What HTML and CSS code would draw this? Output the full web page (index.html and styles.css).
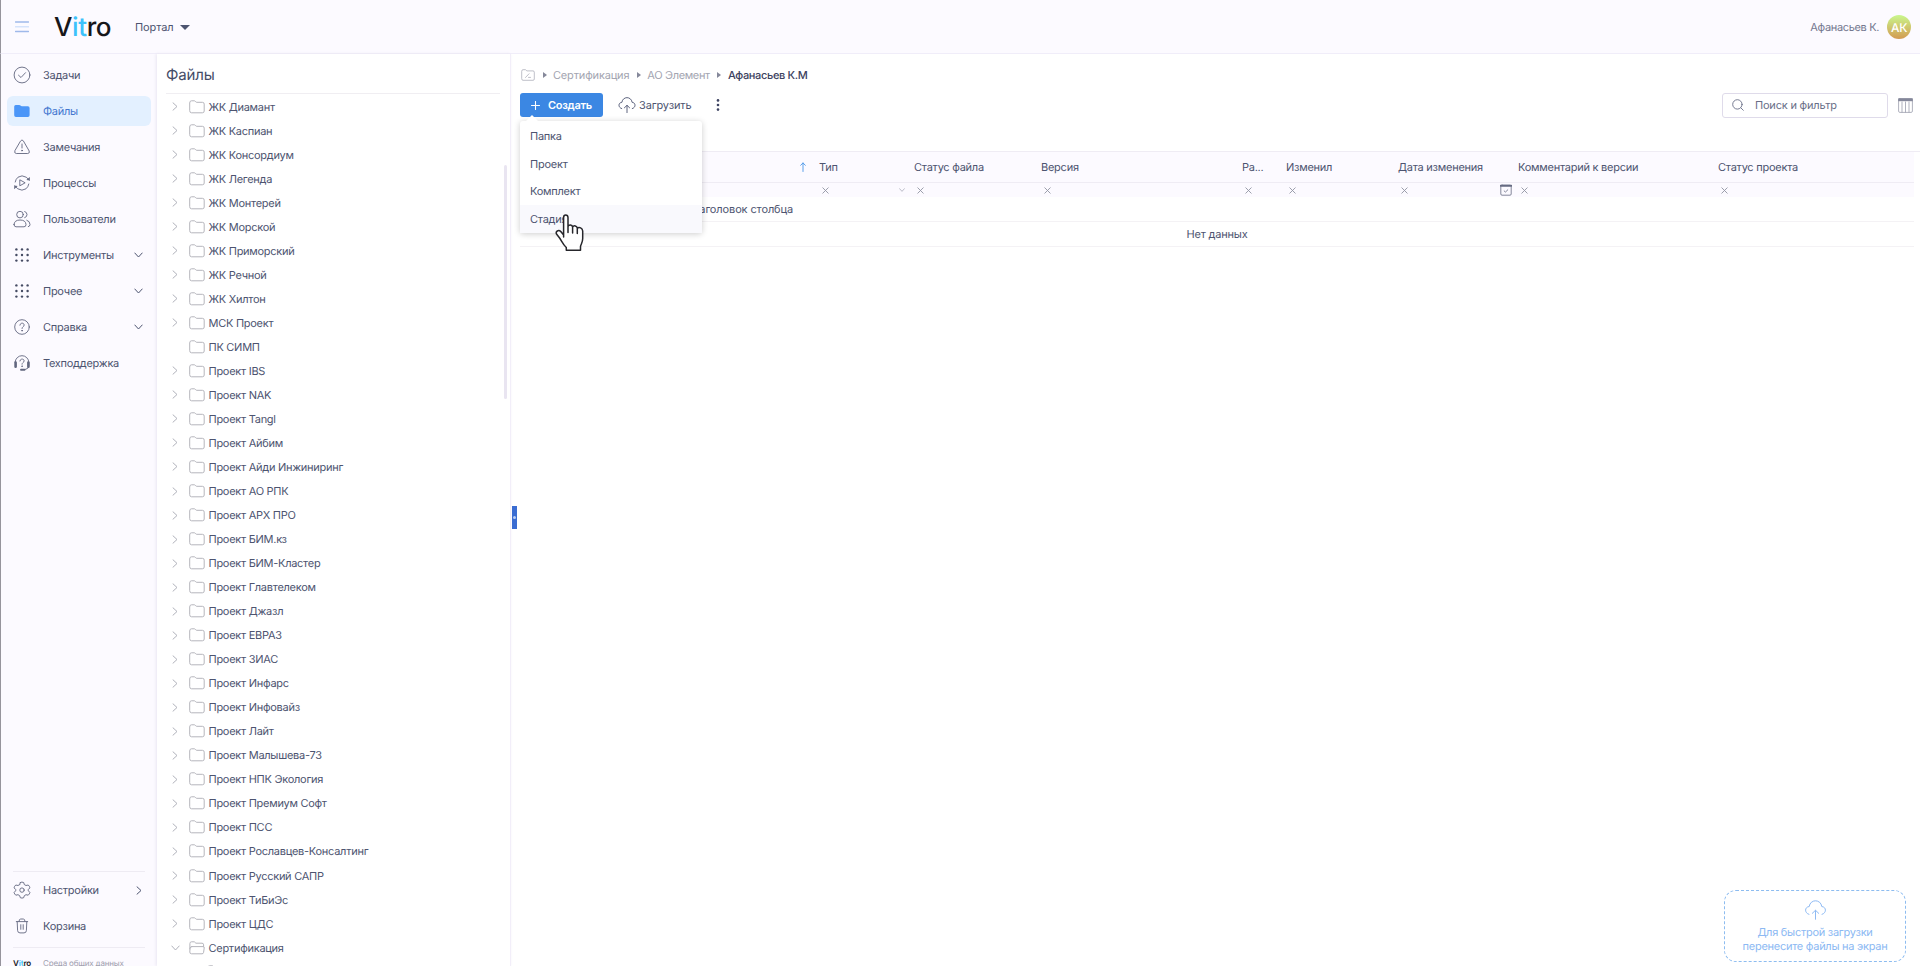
FILE: index.html
```html
<!DOCTYPE html>
<html lang="ru">
<head>
<meta charset="utf-8">
<title>Vitro — Файлы</title>
<link rel="stylesheet" href="styles.css">
</head>
<body>
<svg class="sprite" aria-hidden="true">
  <symbol id="chev" viewBox="0 0 6 9"><path d="M1 .8 5 4.5 1 8.2"/></symbol>
  <symbol id="chev-down" viewBox="0 0 9 6"><path d="M.8 1 4.5 5 8.2 1"/></symbol>
  <symbol id="folder" viewBox="0 0 16 14"><path d="M.7 2.6Q.7.8 2.5.8H5.3Q6 .8 6.4 1.4L6.9 2Q7.2 2.3 8 2.3H13.4Q15.2 2.3 15.2 4.1V11Q15.2 12.8 13.4 12.8H2.5Q.7 12.8.7 11Z"/></symbol>
  <symbol id="folder-open" viewBox="0 0 16 14"><path d="M.9 8V2.6Q.9.8 2.5.8H5.3L6.9 2.2H13Q14.6 2.2 14.6 3.8V5.4M2.8 5.6H14Q15.5 5.6 15.2 7L14.6 11.4Q14.4 12.8 13 12.8H2.6Q.7 12.8.8 11L1 7.2Q1.2 5.6 2.8 5.6Z"/></symbol>
  <symbol id="x" viewBox="0 0 7 7"><path d="M.8.8 6.2 6.2M6.2.8.8 6.2"/></symbol>
  <symbol id="dots" viewBox="0 0 16 16"><g fill="currentColor" stroke="none"><circle cx="2.4" cy="2.4" r="1.2"/><circle cx="8" cy="2.4" r="1.2"/><circle cx="13.6" cy="2.4" r="1.2"/><circle cx="2.4" cy="8" r="1.2"/><circle cx="8" cy="8" r="1.2"/><circle cx="13.6" cy="8" r="1.2"/><circle cx="2.4" cy="13.6" r="1.2"/><circle cx="8" cy="13.6" r="1.2"/><circle cx="13.6" cy="13.6" r="1.2"/></g></symbol>
  <symbol id="cloud" viewBox="0 0 18 17"><path d="M3.7 11.6C-.1 10.600.1 5.600 3.900 5.300C4.800-.9 13.200-.9 14.100 5.300C17.900 5.600 18.100 10.600 14.300 11.600M9 15.600V8.600M6.400 10.800 9 8.300 11.600 10.800"/></symbol>
</svg>

<div class="app">
  <header class="topbar">
    <svg class="burger" viewBox="0 0 14 12"><path d="M.5 1H13.500M.5 10.500H13.500" stroke="#9fb9ea"/><path d="M.5 5.800H13.500" stroke="#d5e3fc"/></svg>
    <div class="logo">V<span>it</span>ro</div>
    <div class="portal">Портал <i class="caret"></i></div>
    <div class="user">Афанасьев К.</div>
    <div class="avatar">АК</div>
  </header>

  <aside class="sidebar">
    <nav class="nav">
      <a class="item"><svg class="ico" viewBox="0 0 18 18"><circle cx="9" cy="9" r="7.900"/><path d="M5.500 9.200 8 11.500 12.500 6.700"/></svg>Задачи</a>
      <a class="item active"><svg class="ico" viewBox="0 0 18 18"><path d="M1.200 4.400Q1.200 2.900 2.700 2.900H6.200Q7 2.900 7.500 3.600T8.900 4.300H14.900Q16.600 4.300 16.600 6V13.200Q16.600 14.900 14.900 14.900H2.900Q1.200 14.900 1.200 13.200Z" fill="#4b96f8" stroke="none"/></svg>Файлы</a>
      <a class="item"><svg class="ico" viewBox="0 0 18 18"><path d="M7.700 2.800Q9 1 10.300 2.800L16.200 13Q17 15.400 14.700 15.500H3.300Q1 15.400 1.800 13ZM9 6V10"/><circle cx="9" cy="12.600" r=".5"/></svg>Замечания</a>
      <a class="item"><svg class="ico" viewBox="0 0 18 18"><path d="M2.200 8Q2.800 5 5 3.200Q9 .5 13.200 3.200L16.500 6.200M15.800 10Q15.200 13 13 14.800Q9 17.500 4.800 14.800L1.800 12"/><path d="M16.900 2.900 16.700 6.600 13.300 6ZM1.100 15.300 1.300 11.500 4.700 12.100Z" fill="currentColor" stroke="none"/><path d="M6.800 6.200V11.800L11.800 9Z"/></svg>Процессы</a>
      <a class="item"><svg class="ico" viewBox="0 0 18 18"><circle cx="7" cy="4.600" r="3.300"/><path d="M1 14.500Q1.300 10 7 10T13 14.500Q13 16.800 11 16.800H3Q1 16.800 1 14.500ZM11.700 1.500Q14 2.200 14 4.600T11.700 7.700M13.800 10.200Q17 11.200 17 14.500Q17 16.400 15.300 16.700"/></svg>Пользователи</a>
      <a class="item"><svg class="ico small"><use href="#dots"/></svg>Инструменты<svg class="more"><use href="#chev-down"/></svg></a>
      <a class="item"><svg class="ico small"><use href="#dots"/></svg>Прочее<svg class="more"><use href="#chev-down"/></svg></a>
      <a class="item"><svg class="ico" viewBox="0 0 18 18"><circle cx="9" cy="9" r="7.300"/><path d="M6.900 7.200C7 4.300 11.300 4.500 11.100 7.200C11 8.800 9 8.700 9 10.500"/><circle cx="9" cy="12.700" r=".4"/></svg>Справка<svg class="more"><use href="#chev-down"/></svg></a>
      <a class="item"><svg class="ico" viewBox="0 0 18 18"><path d="M2.200 8V8.500A6.800 6.800 0 0 1 15.800 8.500V12Q15.800 14.800 12 15.600M6.900 7C7 4.300 11.300 4.500 11.100 7C11 8.500 9 8.500 9 10.200"/><circle cx="9" cy="12.200" r=".3"/><path d="M2.600 8.500V12.800M15.400 8.500V12.800" stroke-width="2.600"/><path d="M8 15.800H11.500" stroke-width="1.900"/></svg>Техподдержка</a>
    </nav>
    <div class="bottom">
      <a class="item"><svg class="ico" viewBox="0 0 18 18"><path d="M7.300 1.500Q9 .6 10.700 1.500L11.300 3.600 13 4.500 15.200 4Q16.700 5.200 16.900 6.900L15.300 8.500V9.800L16.900 11.400Q16.600 13.100 15.200 14.200L13 13.700 11.300 14.700 10.700 16.700Q9 17.500 7.300 16.700L6.700 14.700 5 13.700 2.800 14.200Q1.400 13.100 1.100 11.400L2.700 9.800V8.500L1.100 6.900Q1.300 5.200 2.800 4L5 4.500 6.700 3.600Z"/><circle cx="9" cy="9.100" r="2.200"/></svg>Настройки<svg class="go"><use href="#chev"/></svg></a>
      <a class="item"><svg class="ico" viewBox="0 0 18 18"><path d="M3.300 4.600H14.700M6 4.300Q6 2 7.700 2H10.300Q12 2 12 4.300M4.200 4.800 4.600 13.500Q4.700 15.900 7 15.900H11Q13.300 15.900 13.400 13.500L13.800 4.800M7.800 7.700V12.300M10.200 7.700V12.300"/></svg>Корзина</a>
      <div class="about"><div class="logo mini">V<span>it</span>ro</div><span>Среда общих данных</span></div>
    </div>
  </aside>

  <section class="files">
    <h1>Файлы</h1>
    <ul class="tree">
      <li><svg class="tw"><use href="#chev"/></svg><svg class="fd"><use href="#folder"/></svg>ЖК Диамант</li>
      <li><svg class="tw"><use href="#chev"/></svg><svg class="fd"><use href="#folder"/></svg>ЖК Каспиан</li>
      <li><svg class="tw"><use href="#chev"/></svg><svg class="fd"><use href="#folder"/></svg>ЖК Консордиум</li>
      <li><svg class="tw"><use href="#chev"/></svg><svg class="fd"><use href="#folder"/></svg>ЖК Легенда</li>
      <li><svg class="tw"><use href="#chev"/></svg><svg class="fd"><use href="#folder"/></svg>ЖК Монтерей</li>
      <li><svg class="tw"><use href="#chev"/></svg><svg class="fd"><use href="#folder"/></svg>ЖК Морской</li>
      <li><svg class="tw"><use href="#chev"/></svg><svg class="fd"><use href="#folder"/></svg>ЖК Приморский</li>
      <li><svg class="tw"><use href="#chev"/></svg><svg class="fd"><use href="#folder"/></svg>ЖК Речной</li>
      <li><svg class="tw"><use href="#chev"/></svg><svg class="fd"><use href="#folder"/></svg>ЖК Хилтон</li>
      <li><svg class="tw"><use href="#chev"/></svg><svg class="fd"><use href="#folder"/></svg>МСК Проект</li>
      <li><svg class="tw"></svg><svg class="fd"><use href="#folder"/></svg>ПК СИМП</li>
      <li><svg class="tw"><use href="#chev"/></svg><svg class="fd"><use href="#folder"/></svg>Проект IBS</li>
      <li><svg class="tw"><use href="#chev"/></svg><svg class="fd"><use href="#folder"/></svg>Проект NAK</li>
      <li><svg class="tw"><use href="#chev"/></svg><svg class="fd"><use href="#folder"/></svg>Проект Tangl</li>
      <li><svg class="tw"><use href="#chev"/></svg><svg class="fd"><use href="#folder"/></svg>Проект Айбим</li>
      <li><svg class="tw"><use href="#chev"/></svg><svg class="fd"><use href="#folder"/></svg>Проект Айди Инжиниринг</li>
      <li><svg class="tw"><use href="#chev"/></svg><svg class="fd"><use href="#folder"/></svg>Проект АО РПК</li>
      <li><svg class="tw"><use href="#chev"/></svg><svg class="fd"><use href="#folder"/></svg>Проект АРХ ПРО</li>
      <li><svg class="tw"><use href="#chev"/></svg><svg class="fd"><use href="#folder"/></svg>Проект БИМ.кз</li>
      <li><svg class="tw"><use href="#chev"/></svg><svg class="fd"><use href="#folder"/></svg>Проект БИМ-Кластер</li>
      <li><svg class="tw"><use href="#chev"/></svg><svg class="fd"><use href="#folder"/></svg>Проект Главтелеком</li>
      <li><svg class="tw"><use href="#chev"/></svg><svg class="fd"><use href="#folder"/></svg>Проект Джазл</li>
      <li><svg class="tw"><use href="#chev"/></svg><svg class="fd"><use href="#folder"/></svg>Проект ЕВРАЗ</li>
      <li><svg class="tw"><use href="#chev"/></svg><svg class="fd"><use href="#folder"/></svg>Проект ЗИАС</li>
      <li><svg class="tw"><use href="#chev"/></svg><svg class="fd"><use href="#folder"/></svg>Проект Инфарс</li>
      <li><svg class="tw"><use href="#chev"/></svg><svg class="fd"><use href="#folder"/></svg>Проект Инфовайз</li>
      <li><svg class="tw"><use href="#chev"/></svg><svg class="fd"><use href="#folder"/></svg>Проект Лайт</li>
      <li><svg class="tw"><use href="#chev"/></svg><svg class="fd"><use href="#folder"/></svg>Проект Малышева-73</li>
      <li><svg class="tw"><use href="#chev"/></svg><svg class="fd"><use href="#folder"/></svg>Проект НПК Экология</li>
      <li><svg class="tw"><use href="#chev"/></svg><svg class="fd"><use href="#folder"/></svg>Проект Премиум Софт</li>
      <li><svg class="tw"><use href="#chev"/></svg><svg class="fd"><use href="#folder"/></svg>Проект ПСС</li>
      <li><svg class="tw"><use href="#chev"/></svg><svg class="fd"><use href="#folder"/></svg>Проект Рославцев-Консалтинг</li>
      <li><svg class="tw"><use href="#chev"/></svg><svg class="fd"><use href="#folder"/></svg>Проект Русский САПР</li>
      <li><svg class="tw"><use href="#chev"/></svg><svg class="fd"><use href="#folder"/></svg>Проект ТиБиЭс</li>
      <li><svg class="tw"><use href="#chev"/></svg><svg class="fd"><use href="#folder"/></svg>Проект ЦДС</li>
      <li><svg class="tw open"><use href="#chev-down"/></svg><svg class="fd"><use href="#folder-open"/></svg>Сертификация</li>
      <li class="child"><svg class="fd"><use href="#folder"/></svg></li>
    </ul>
    <div class="scroll"></div>
    <div class="handle"></div>
  </section>

  <main class="main">
    <div class="crumbs">
      <svg class="root" viewBox="0 0 14 12"><path d="M.7 2Q.7.700 2 .7H4.600L5.800 1.900H12Q13.300 1.900 13.300 3.200V10Q13.300 11.300 12 11.300H2Q.7 11.300.7 10ZM4.500 8.500 8 4.800M7.500 8.400H9.500"/></svg>
      <i></i><span>Сертификация</span><i></i><span class="near">АО Элемент</span><i></i><b>Афанасьев К.М</b>
    </div>
    <div class="toolbar">
      <div class="create"><svg viewBox="0 0 10 10"><path d="M5 .5V9.500M.5 5H9.500"/></svg>Создать</div>
      <div class="upload"><svg><use href="#cloud"/></svg>Загрузить</div>
      <svg class="kebab" viewBox="0 0 4 12"><circle cx="2" cy="1.400" r="1.300"/><circle cx="2" cy="6" r="1.300"/><circle cx="2" cy="10.600" r="1.300"/></svg>
      <div class="search"><svg viewBox="0 0 12 12"><circle cx="5.400" cy="5.400" r="4.700"/><path d="M8.900 8.900 11.300 11.300"/></svg>Поиск и фильтр</div>
      <svg class="cols" viewBox="0 0 15 15"><rect x=".6" y=".6" width="13.800" height="13.800" rx="1.300"/><path d="M4 4V14.400M7.500 4V14.400M11 4V14.400"/><path d="M.2.300H14.800V3.200H.2Z" class="cap"/></svg>
    </div>
    <div class="table">
      <div class="row head"><div class="sort"><svg viewBox="0 0 6 10"><path d="M3 9.500V1M.7 3.300 3 .9 5.300 3.300"/></svg></div><div>Тип</div><div>Статус файла</div><div>Версия</div><div>Ра...</div><div>Изменил</div><div>Дата изменения</div><div>Комментарий к версии</div><div>Статус проекта</div></div>
      <div class="row filter"><div></div><div><svg><use href="#x"/></svg><svg class="sel"><use href="#chev-down"/></svg></div><div><svg><use href="#x"/></svg></div><div><svg><use href="#x"/></svg></div><div><svg><use href="#x"/></svg></div><div><svg><use href="#x"/></svg></div><div><svg><use href="#x"/></svg><svg class="cal" viewBox="0 0 12 12"><rect x=".8" y="1.200" width="10.400" height="10" rx="1.200"/><path d="M.8 1.800H11.200" stroke-width="2"/><path d="M4.200 7 5.500 8 7.800 5.800"/></svg></div><div><svg><use href="#x"/></svg></div><div><svg><use href="#x"/></svg></div></div>
      <div class="group"><span>Перетащите сюда заголовок столбца</span></div>
      <div class="empty">Нет данных</div>
    </div>
    <div class="menu">
      <div>Папка</div><div>Проект</div><div>Комплект</div><div class="hover">Стадия</div>
    </div>
    <svg class="pointer" viewBox="0 0 30 38"><path d="M8.600 23V3.500C8.600.3 12.800.3 13 3.500V12.500C13.800 10.200 17.300 10.500 17.600 13C18.800 11 22 11.700 22.300 14.200C24.200 12.600 27.500 14 27.700 17V24.500C27.700 28.500 26 30 25.500 32.500V36.300H11.300V33.500C8 30.500 6.500 26.500 4.600 24L1.500 20C.3 17.500 3.500 15.300 5.800 17.600L8.600 21M13 12V18.500M17.600 13V19M22.300 14.200V19.500"/></svg>
    <div class="drop"><svg viewBox="0 0 18 17"><use href="#cloud"/></svg>Для быстрой загрузки<br>перенесите файлы на экран</div>
  </main>
</div>
</body>
</html>
```
FILE: styles.css
```css
* { box-sizing: border-box; }
body { margin: 0; font: 11px/16px Inter, sans-serif; letter-spacing: -.27px; text-rendering: geometricPrecision; color: #4d5470; background: #fff; overflow: hidden; }
svg { fill: none; stroke: currentColor; stroke-linecap: round; stroke-linejoin: round; flex: none; display: block; }
.sprite { position: absolute; width: 0; height: 0; }
.app { width: 1920px; height: 966px; overflow: hidden; display: grid; grid-template: 54px 912px / 157px 354px 1fr; }

.topbar { grid-column: 1 / -1; background: #fcfaff; border-bottom: 1px solid #f0edf9; border-left: 1px solid #96949c; display: flex; align-items: center; padding: 1px 9px 0 14px; }
.burger { width: 14px; height: 12px; stroke-width: 1.500; }
.logo { font-size: 26px; line-height: 30px; font-weight: 500; color: #16161a; letter-spacing: -.4px; margin: 2px 0 0 25px; width: 59px; }
.logo span { color: #3cc2fb; }
.portal { margin-left: 22px; letter-spacing: -.1px; display: flex; align-items: center; gap: 6px; flex: 1; }
.caret { border: 5px solid transparent; border-top-color: #4d5470; border-bottom: 0; }
.user { color: #74788f; letter-spacing: -.35px; }
.avatar { width: 24px; height: 24px; margin-left: 8px; border-radius: 50%; background: linear-gradient(#c9f78d, #d39a51); color: #fff; font-size: 12px; font-weight: 500; line-height: 25px; text-align: center; }

.sidebar { background: #fcfaff; border-left: 1px solid #96949c; display: flex; flex-direction: column; justify-content: space-between; padding: 6px 6px 0; }
.nav { display: flex; flex-direction: column; gap: 6px; }
.item { height: 30px; display: flex; align-items: center; padding: 0 8px 0 6px; border-radius: 6px; }
.active { background: #e3f0ff; color: #4377cf; }
.ico { width: 18px; height: 18px; margin-right: 12px; stroke-width: .9; color: #62677f; }
.ico.small { width: 16px; height: 16px; margin: 0 13px 0 1px; color: #454b63; }
.more { width: 9px; height: 6px; margin-left: auto; }
.go { width: 6px; height: 9px; margin: 0 1px 0 auto; }
.bottom { height: 95px; margin: 0 6px; border-top: 1px solid #eeebf3; padding-top: 3px; }
.bottom .item { margin: 0 -6px 6px; }
.about { border-top: 1px solid #eeebf3; margin-top: 4px; padding-top: 7px; display: flex; font-size: 8px; letter-spacing: -.18px; white-space: nowrap; color: #a09fae; }
.mini { font-size: 8px; line-height: 16px; margin: 0; width: 30px; letter-spacing: -.1px; font-weight: 600; }

.files { position: relative; border-right: 1px solid #f2eef9; box-shadow: -1px 0 3px #e9e6f2; padding-left: 9px; background: #fff; }
h1 { margin: 0 10px .5px 0; height: 40px; font-weight: 400; font-size: 15px; letter-spacing: -.15px; line-height: 42px; border-bottom: 1px solid #f0eef2; color: #444b66; }
.tree { list-style: none; margin: 0; padding: 0 0 0 6px; }
.tree li { height: 24.040px; display: flex; align-items: center; }
.tw { width: 6px; height: 9px; margin-right: 11px; color: #a7a9b3; stroke-width: .9; }
.tw.open { width: 9px; height: 6px; margin: 0 9.500px 0 -1.500px; }
.fd { width: 16px; height: 14px; margin-right: 3.500px; color: #b5b5bc; stroke-width: 1; }
.tree .child { padding-left: 35px; }
.scroll { position: absolute; left: 347px; top: 111px; width: 3px; height: 234px; border-radius: 2px; background: #e9e5f1; }
.handle { position: absolute; left: 355px; top: 452px; width: 5px; height: 23px; background: #3a6cd2; z-index: 1; }
.handle::after { content: ""; position: absolute; left: 1px; top: 10px; width: 3px; height: 3px; background: #b9cdf4; border-radius: 50%; }

.main { position: relative; padding-left: 9px; }
.crumbs { display: flex; align-items: center; height: 43px; color: #a3a5b1; padding: 0 0 2px 1px; letter-spacing: -.17px; }
.root { width: 14px; height: 12px; stroke-width: .7; }
.crumbs i { border: 3px solid transparent; border-left: 4px solid #85889a; border-right: 0; margin: 0 6.500px 0 7.500px; }
.crumbs .near { letter-spacing: -.35px; }
.crumbs b { font-weight: 500; color: #3c4260; letter-spacing: -.35px; }
.toolbar { display: flex; align-items: center; height: 24px; margin-top: -4px; padding-right: 7px; }
.create { width: 83px; height: 24px; border-radius: 3px; background: #3b87e3; color: #fff; font-weight: 600; display: flex; align-items: center; padding-left: 11px; gap: 8px; }
.create svg { width: 9px; height: 9px; stroke-width: 1.200; }
.upload { margin-left: 15px; display: flex; align-items: center; gap: 3px; letter-spacing: -.15px; }
.upload svg { width: 18px; height: 17px; stroke-width: .9; }
.kebab { width: 4px; height: 12px; margin-left: 25px; fill: #3e4462; stroke: none; }
.search { margin-left: auto; width: 166px; height: 25px; border: 1px solid #dfdbea; border-radius: 3px; display: flex; align-items: center; padding-left: 9px; gap: 11px; color: #696e87; letter-spacing: -.2px; }
.search svg { width: 12px; height: 12px; stroke-width: .9; }
.cols { width: 15px; height: 15px; margin-left: 10px; color: #a6a8b5; stroke-width: .9; }
.cap { fill: #84879a; stroke: none; }

.table { margin-top: 34px; border-top: 1px solid #efecf4; letter-spacing: -.2px; }
.row { display: grid; grid-template-columns: 295px 95px 127px 201px 44px 112px 120px 200px 200px; width: 1394px; background: #fcfaff; }
.row > div { display: flex; align-items: center; padding-left: 4px; white-space: nowrap; }
.head { height: 31px; border-bottom: 1px solid #efecf4; letter-spacing: -.25px; }
.sort svg { width: 6px; height: 10px; margin-left: 276px; color: #4b96e8; stroke-width: .9; }
.filter { height: 14px; color: #9194a3; }
.filter svg { width: 7px; height: 7px; margin-left: 2.500px; stroke-width: .9; }
.filter .sel { width: 6px; height: 4px; margin: 0 5px 0 auto; }
.filter .cal { width: 12px; height: 12px; margin: 0 2px 0 auto; color: #666b82; stroke-width: .8; }
.group, .empty { width: 1394px; height: 25px; border-bottom: 1px solid #f4f2f5; line-height: 25px; }
.group span { display: block; width: 273px; text-align: right; letter-spacing: -.12px; }
.empty { text-align: center; }

.menu { position: absolute; left: 9px; top: 67px; width: 182px; height: 112px; background: #fff; border-radius: 3px; box-shadow: 0 1px 6px #0003; padding-top: 1px; letter-spacing: -.25px; }
.menu::before { content: ""; position: absolute; left: 6px; top: -6px; border: 6px solid transparent; border-bottom-color: #fff; border-top: 0; }
.menu div { height: 27.700px; line-height: 28px; padding-left: 10px; }
.menu .hover { background: #f9f9fd; }
.pointer { position: absolute; left: 44px; top: 160px; width: 30px; height: 38px; fill: #fff; stroke: #26262b; stroke-width: 1.500; }
.drop { position: absolute; left: 1213px; top: 836px; width: 182px; height: 72px; border: 1px dashed #8dbcf0; border-radius: 12px; text-align: center; color: #8cb9f3; line-height: 13.500px; padding-top: 9px; }
.drop svg { width: 23px; height: 21px; margin: 0 auto 5px; stroke-width: .8; }
```
